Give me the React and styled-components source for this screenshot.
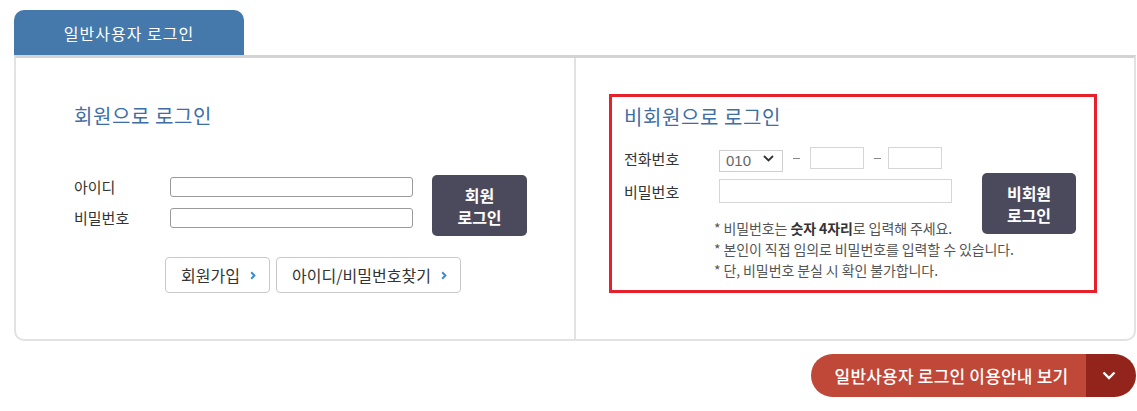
import React from "react";
import styled, { createGlobalStyle } from "styled-components";

const Global = createGlobalStyle`
  html, body { margin: 0; padding: 0; background: #fff; }
  body { font-family: "Noto Sans CJK KR", "Noto Sans", sans-serif; color: #333; }
  * { box-sizing: border-box; }
`;

const Page = styled.div`
  padding: 10px 0 0 14px;
  width: 1137px;
`;

const Tab = styled.div`
  width: 230px;
  height: 45px;
  background: #4579ac;
  border-radius: 10px 10px 0 0;
  color: #fff;
  font-size: 16px;
  display: flex;
  align-items: center;
  justify-content: center;
  letter-spacing: 1px;
  padding-top: 1px;
`;

const Panel = styled.div`
  width: 1122px;
  height: 286px;
  border-top: 3px solid #d3d3d3;
  border-left: 2px solid #e2e2e2;
  border-right: 2px solid #e2e2e2;
  border-bottom: 2px solid #e2e2e2;
  border-radius: 0 0 10px 10px;
  display: grid;
  grid-template-columns: 558px 1fr;
`;

const Column = styled.div`
  padding: ${(p) => p.$pad};
  border-left: ${(p) => (p.$divider ? "2px solid #e2e2e2" : "none")};
`;

const Heading = styled.h2`
  margin: 0;
  font-size: 20px;
  line-height: 26px;
  font-weight: 400;
  color: #3d6ea6;
  letter-spacing: 0.6px;
`;

const MemberForm = styled.div`
  display: flex;
  align-items: flex-start;
  margin-top: 46px;
`;

const Fields = styled.div`
  display: flex;
  flex-direction: column;
  gap: ${(p) => p.$gap}px;
  padding-top: ${(p) => p.$top || 0}px;
`;

const Row = styled.div`
  display: flex;
  align-items: center;
`;

const Label = styled.label`
  width: ${(p) => p.$w}px;
  font-size: 15px;
  color: #333;
  flex-shrink: 0;
`;

const TextInput = styled.input`
  width: ${(p) => p.$w}px;
  height: ${(p) => p.$h}px;
  border: 1px solid ${(p) => p.$border};
  border-radius: ${(p) => p.$radius}px;
  padding: 0 6px;
  font-size: 13px;
  outline: none;
  background: #fff;
`;

const DarkButton = styled.button`
  width: ${(p) => p.$w}px;
  height: 61px;
  margin-left: ${(p) => p.$gap}px;
  margin-top: ${(p) => p.$top || 0}px;
  background: #4b4a5d;
  border: none;
  border-radius: 5px;
  color: #fff;
  font-family: inherit;
  font-size: 16px;
  font-weight: 700;
  line-height: 22px;
  padding: 0;
  flex-shrink: 0;
  cursor: pointer;
`;

const LinkRow = styled.div`
  display: flex;
  gap: 6px;
  margin: 21px 0 0 91px;
`;

const LinkButton = styled.button`
  width: ${(p) => p.$w}px;
  height: 36px;
  border: 1px solid #c9c9c9;
  border-radius: 4px;
  background: #fff;
  font-family: inherit;
  font-size: 16px;
  color: #333;
  display: flex;
  align-items: center;
  justify-content: center;
  gap: 10px;
  padding: 0 0 0 2px;
  cursor: pointer;
`;

const RedBox = styled.div`
  width: 488px;
  height: 199px;
  border: 3px solid #e6212b;
  padding: 7px 0 0 12px;
`;

const GuestForm = styled.div`
  display: flex;
  align-items: flex-start;
  margin-top: 17px;
`;

const GuestFields = styled.div`
  width: 328px;
  flex-shrink: 0;
  display: flex;
  flex-direction: column;
  gap: 10px;
`;

const SelectWrap = styled.div`
  position: relative;
  width: 64px;
  height: 22px;
`;

const Select = styled.select`
  appearance: none;
  width: 100%;
  height: 100%;
  border: 1px solid #cfcfcf;
  background: #fff;
  font-family: "Liberation Sans", sans-serif;
  font-size: 15px;
  color: #666;
  padding: 0 0 0 6px;
  outline: none;
`;

const SelectArrow = styled.svg`
  position: absolute;
  right: 9px;
  top: 8px;
  pointer-events: none;
`;

const Dash = styled.span`
  width: 7px;
  margin: 0 ${(p) => p.$r}px 0 10px;
  height: 1px;
  background: #888;
`;

const Notes = styled.ul`
  list-style: none;
  margin: 5px 0 0 90px;
  padding: 0;
  white-space: nowrap;
  font-size: 14px;
  line-height: 21px;
  color: #555;
  letter-spacing: -0.1px;
`;

const Strong = styled.b`
  color: #333;
  font-weight: 700;
`;

const Footer = styled.div`
  display: flex;
  justify-content: flex-end;
  width: 1122px;
  margin-top: 13px;
`;

const GuideButton = styled.button`
  display: flex;
  height: 43px;
  border: none;
  padding: 0;
  border-radius: 22px;
  overflow: hidden;
  font-family: inherit;
  cursor: pointer;
  background: transparent;
`;

const GuideText = styled.span`
  width: 275px;
  background: #bf4839;
  color: #fff;
  font-size: 17px;
  font-weight: 500;
  letter-spacing: 0.2px;
  display: flex;
  align-items: center;
  justify-content: center;
  padding-left: 6px;
`;

const GuideToggle = styled.span`
  width: 50px;
  background: #93241b;
  display: flex;
  align-items: center;
  justify-content: center;
  padding-right: 4px;
`;

const Chevron = () => (
  <svg width="6" height="9" viewBox="0 0 6 9">
    <polyline points="1.2,1.2 4.4,4.5 1.2,7.8" fill="none" stroke="#3d8ad2" strokeWidth="2" />
  </svg>
);

export default function App() {
  return (
    <>
      <Global />
      <Page>
        <Tab>일반사용자 로그인</Tab>
        <Panel>
          <Column $pad="45px 0 0 58px">
            <Heading>회원으로 로그인</Heading>
            <MemberForm>
              <Fields $gap={10} $top={1}>
                <Row>
                  <Label $w={96}>아이디</Label>
                  <TextInput $w={243} $h={20} $border="#9a9a9a" $radius={3} />
                </Row>
                <Row>
                  <Label $w={96}>비밀번호</Label>
                  <TextInput type="password" $w={243} $h={20} $border="#9a9a9a" $radius={3} />
                </Row>
              </Fields>
              <DarkButton $w={95} $gap={19}>
                회원
                <br />
                로그인
              </DarkButton>
            </MemberForm>
            <LinkRow>
              <LinkButton $w={105}>
                회원가입 <Chevron />
              </LinkButton>
              <LinkButton $w={185}>
                아이디/비밀번호찾기 <Chevron />
              </LinkButton>
            </LinkRow>
          </Column>
          <Column $divider $pad="36px 0 0 33px">
            <RedBox>
              <Heading>비회원으로 로그인</Heading>
              <GuestForm>
                <GuestFields>
                  <Row>
                    <Label $w={95}>전화번호</Label>
                    <SelectWrap>
                      <Select defaultValue="010">
                        <option>010</option>
                        <option>011</option>
                        <option>016</option>
                        <option>017</option>
                        <option>019</option>
                      </Select>
                      <SelectArrow width="11" height="7" viewBox="0 0 11 7">
                        <polyline points="1,1 5.5,5.5 10,1" fill="none" stroke="#333" strokeWidth="1.8" />
                      </SelectArrow>
                    </SelectWrap>
                    <Dash $r={10} />
                    <TextInput $w={54} $h={22} $border="#d6d6d6" $radius={0} />
                    <Dash $r={7} />
                    <TextInput $w={54} $h={22} $border="#d6d6d6" $radius={0} />
                  </Row>
                  <Row>
                    <Label $w={95}>비밀번호</Label>
                    <TextInput type="password" $w={233} $h={24} $border="#d6d6d6" $radius={0} />
                  </Row>
                  <Notes>
                    <li>
                      * 비밀번호는 <Strong>숫자 4자리</Strong>로 입력해 주세요.
                    </li>
                    <li>* 본인이 직접 임의로 비밀번호를 입력할 수 있습니다.</li>
                    <li>* 단, 비밀번호 분실 시 확인 불가합니다.</li>
                  </Notes>
                </GuestFields>
                <DarkButton $w={94} $gap={30} $top={26}>
                  비회원
                  <br />
                  로그인
                </DarkButton>
              </GuestForm>
            </RedBox>
          </Column>
        </Panel>
        <Footer>
          <GuideButton>
            <GuideText>일반사용자 로그인 이용안내 보기</GuideText>
            <GuideToggle>
              <svg width="14" height="9" viewBox="0 0 14 9">
                <polyline points="1.5,1.5 7,7 12.5,1.5" fill="none" stroke="#fff" strokeWidth="2.4" />
              </svg>
            </GuideToggle>
          </GuideButton>
        </Footer>
      </Page>
    </>
  );
}
